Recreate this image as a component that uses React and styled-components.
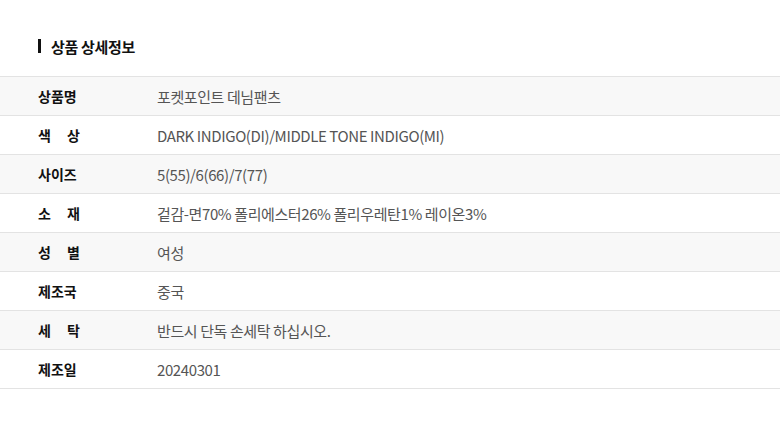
import React from 'react'
import styled, { createGlobalStyle } from 'styled-components'

const Global = createGlobalStyle`
  body {
    margin: 0;
    background: #fff;
    font-family: "Noto Sans CJK KR", "Noto Sans", sans-serif;
  }
`

const Wrap = styled.div`
  width: 780px;
  height: 427px;
  padding-top: 36px;
  box-sizing: border-box;
`

const Title = styled.h3`
  display: flex;
  align-items: center;
  gap: 10px;
  margin: 0 0 20px 38px;
  font-size: 15px;
  font-weight: 700;
  color: #111;
  height: 20px;
  letter-spacing: -0.3px;
  &::before {
    content: '';
    width: 3px;
    height: 14px;
    background: #111;
  }
`

const Table = styled.div`
  border-top: 1px solid #e3e3e3;
`

const Row = styled.div`
  display: flex;
  align-items: center;
  height: 38px;
  border-bottom: 1px solid #e3e3e3;
  background: ${p => (p.$shade ? '#f8f8f8' : '#fff')};
`

const Label = styled.div`
  width: 119px;
  padding-left: 38px;
  font-size: 14px;
  font-weight: 700;
  color: #111;
`

const Spread = styled.span`
  display: flex;
  justify-content: space-between;
  width: 42px;
`

const Value = styled.div`
  font-size: 15px;
  color: #555;
  letter-spacing: -0.4px;
`

const rows = [
  ['상품명', '포켓포인트 데님팬츠'],
  ['색상', 'DARK INDIGO(DI)/MIDDLE TONE INDIGO(MI)'],
  ['사이즈', '5(55)/6(66)/7(77)'],
  ['소재', '겉감-면70% 폴리에스터26% 폴리우레탄1% 레이온3%'],
  ['성별', '여성'],
  ['제조국', '중국'],
  ['세탁', '반드시 단독 손세탁 하십시오.'],
  ['제조일', '20240301'],
]

export default function App() {
  return (
    <Wrap>
      <Global />
      <Title>상품 상세정보</Title>
      <Table>
        {rows.map(([k, v], i) => (
          <Row key={k} $shade={i % 2 === 0}>
            <Label>
              {k.length === 2 ? (
                <Spread>
                  <span>{k[0]}</span>
                  <span>{k[1]}</span>
                </Spread>
              ) : (
                k
              )}
            </Label>
            <Value>{v}</Value>
          </Row>
        ))}
      </Table>
    </Wrap>
  )
}
